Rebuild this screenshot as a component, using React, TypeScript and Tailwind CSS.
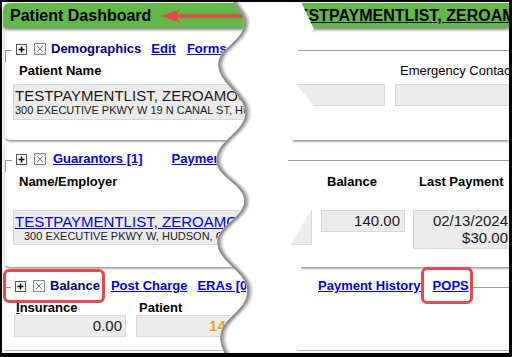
const WAVE =
  'M232,0 C236,8 244,14 244,22 C244,42 218,48 218,64 C218,84 245,93 245,113 C245,132 216,141 216,160 C216,177 244,184 244,201 C244,218 217,226 217,242 C217,262 247,271 247,291 C247,312 220,318 220,338 C220,346 224,352 226,357'

const GAP =
  WAVE +
  ' L297,357 L297,350 L305,300 L301,267 L288,249 L311,210 L288,161 L293,140 L313,105 L296,84 L298,50 L314,29 L300,0 Z'

const SHADES = ['#f3f3f3', '#e4e4e4', '#d0d0d0', '#b9b9b9', '#a2a2a2', '#8c8c8c']

function PlusBox() {
  return (
    <svg width="11" height="11" viewBox="0 0 11 11" className="shrink-0">
      <rect x="0.5" y="0.5" width="10" height="10" fill="#fff" stroke="#555" />
      <path d="M2.5 5.5h6M5.5 2.5v6" stroke="#000" strokeWidth="1.5" />
    </svg>
  )
}

function CloseBox() {
  return (
    <svg width="12" height="12" viewBox="0 0 12 12" className="shrink-0">
      <rect x="0.5" y="0.5" width="11" height="11" fill="#fff" stroke="#8a8a8a" />
      <path d="M3 3L9 9M9 3L3 9" stroke="#7a7a7a" strokeWidth="1" />
    </svg>
  )
}

function Bracket() {
  return <div className="w-[7px] h-[12px] mt-[9px] self-start shrink-0 border-l border-t border-[#999]" />
}

function Rule() {
  return <div className="flex-1 h-0 mt-[9px] self-start border-t border-[#999]" />
}

function Link({ children, className = '' }: { children: React.ReactNode; className?: string }) {
  return <a className={`text-[#0000ee] underline font-bold whitespace-nowrap shrink-0 ${className}`}>{children}</a>
}

const box = 'shrink-0 bg-[#ebebeb] border border-[#d8d8d8]'

export default function App() {
  return (
    <div className="w-[512px] h-[357px] bg-black pl-[2px] pt-[2px] pr-[3px] pb-[4px] font-['Liberation_Sans',Arial,sans-serif] text-black">
      <div className="relative w-full h-full bg-white overflow-hidden">
        {/* title bar */}
        <div className="mt-[1px] ml-[1px] h-[25px] flex items-center bg-[#63b84a] rounded-tl-[7px] rounded-bl-[3px] shadow-[0_2px_3px_rgba(0,0,0,0.45)] text-[16px] font-bold whitespace-nowrap overflow-hidden">
          <div className="w-[285px] shrink-0 pl-[7px]">Patient Dashboard</div>
          <div className="underline">TESTPAYMENTLIST, ZEROAMOUNT</div>
        </div>

        {/* demographics */}
        <div className="ml-[2px] pt-[13px] pb-[20px] border-b border-l border-[#a0a0a0] border-l-[#e6e6e6] rounded-bl-[6px] shadow-[0_1px_2px_rgba(0,0,0,0.3)]">
          <div className="flex items-center h-[16px] text-[13px] leading-[16px] font-bold">
            <Bracket />
            <div className="ml-[4px]"><PlusBox /></div>
            <div className="ml-[7px]"><CloseBox /></div>
            <span className="ml-[5px] text-[#00008b] shrink-0">Demographics</span>
            <Link className="ml-[10px]">Edit</Link>
            <Link className="ml-[11px]">Forms</Link>
            <Rule />
          </div>
          <div className="flex items-center mt-[6px] h-[16px] text-[13px] leading-[16px] whitespace-nowrap">
            <div className="w-[395px] shrink-0 pl-[14px] font-bold">Patient Name</div>
            <div>Emergency Contact</div>
          </div>
          <div className="flex mt-[5px] pl-[8px]">
            <div className={`${box} w-[248px] h-[36px] pt-[2px] pl-[1px] text-[#1a1a1a] whitespace-nowrap overflow-hidden`}>
              <div className="text-[15px] leading-[17px]">TESTPAYMENTLIST, ZEROAMOUNT</div>
              <div className="text-[11px] leading-[13px]">300 EXECUTIVE PKWY W 19 N CANAL ST, HUDSON, OH 44236</div>
            </div>
            <div className={`${box} ml-[25px] w-[99px] h-[22px]`} />
            <div className={`${box} ml-[10px] w-[130px] h-[22px]`} />
          </div>
        </div>

        {/* guarantors */}
        <div className="ml-[2px] mt-[4px] pt-[6px] pb-[18px] border-b border-l border-[#a0a0a0] border-l-[#e6e6e6] rounded-bl-[6px] shadow-[0_1px_2px_rgba(0,0,0,0.3)]">
          <div className="flex items-center h-[16px] text-[13px] leading-[16px] font-bold">
            <Bracket />
            <div className="ml-[4px]"><PlusBox /></div>
            <div className="ml-[7px]"><CloseBox /></div>
            <Link className="ml-[7px]">Guarantors [1]</Link>
            <Link className="ml-[29px]">Payments</Link>
            <Rule />
          </div>
          <div className="flex items-center mt-[7px] h-[16px] text-[13px] leading-[16px] font-bold whitespace-nowrap">
            <div className="w-[322px] shrink-0 pl-[14px]">Name/Employer</div>
            <div className="w-[92px] shrink-0">Balance</div>
            <div>Last Payment</div>
          </div>
          <div className="flex items-start mt-[20px] pl-[8px] text-[15px] text-[#1a1a1a]">
            <div className={`${box} w-[299px] h-[35px] pt-[3px] pl-[1px] whitespace-nowrap overflow-hidden`}>
              <div className="leading-[16px] text-[#0000ee] underline">TESTPAYMENTLIST, ZEROAMOUNT</div>
              <div className="pl-[9px] text-[11px] leading-[13px]">300 EXECUTIVE PKWY W, HUDSON, OH 44236</div>
            </div>
            <div className={`${box} ml-[9px] w-[84px] h-[22px] pr-[4px] text-right leading-[20px]`}>140.00</div>
            <div className={`${box} ml-[8px] w-[101px] h-[39px] pt-[1px] pr-[5px] text-right leading-[17px]`}>
              <div>02/13/2024</div>
              <div>$30.00</div>
            </div>
          </div>
        </div>

        {/* balance */}
        <div className="ml-[2px] mt-[2px] pt-[8px] pb-[13px] border-b border-[#b0b0b0]">
          <div className="flex items-center h-[16px] text-[13px] leading-[16px] font-bold">
            <div className="w-[314px] shrink-0 flex items-center h-[16px] overflow-hidden">
              <Bracket />
              <div className="ml-[4px]"><PlusBox /></div>
              <div className="ml-[7px]"><CloseBox /></div>
              <span className="ml-[5px] text-[#00008b] shrink-0">Balance</span>
              <Link className="ml-[11px]">Post Charge</Link>
              <Link className="ml-[10px]">ERAs [0]</Link>
            </div>
            <Link>Payment History</Link>
            <Link className="ml-[12px]">POPS</Link>
            <div className="ml-[2px] flex-1 h-0 mt-[9px] self-start border-t border-[#999]" />
          </div>
          <div className="flex items-center mt-[6px] h-[15px] text-[13px] leading-[15px] font-bold">
            <div className="w-[135px] shrink-0 pl-[12px]">
              <span className="underline">I</span>nsurance
            </div>
            <div>Patient</div>
          </div>
          <div className="flex pl-[10px] text-[15px] leading-[20px]">
            <div className={`${box} w-[112px] h-[22px] pr-[3px] text-right text-[#1a1a1a]`}>0.00</div>
            <div className={`${box} ml-[10px] w-[123px] h-[22px] pr-[3px] text-right font-bold text-[#f0a30a]`}>140.00</div>
          </div>
        </div>

        {/* torn paper gap and arrow */}
        <svg
          className="absolute left-0 top-0 pointer-events-none"
          width="507"
          height="351"
          viewBox="2 2 507 351"
        >
          <line x1="176" y1="16" x2="262" y2="16" stroke="#e8474d" strokeWidth="3.5" />
          <polygon points="160,16 180,9.5 176,16 180,22.5" fill="#e8474d" />
          <path d={GAP} fill="#fff" />
          {SHADES.map((c, i) => (
            <path
              key={c}
              d={WAVE}
              transform={`translate(${6 - i},0)`}
              fill="none"
              stroke={c}
              strokeWidth="1.6"
            />
          ))}
        </svg>

        {/* highlights */}
        <div className="absolute left-[1px] top-[267px] w-[102px] h-[34px] border-[3px] border-[#e8474d] rounded-[6px]" />
        <div className="absolute left-[419px] top-[265px] w-[52px] h-[37px] border-[3px] border-[#e8474d] rounded-[6px]" />
      </div>
    </div>
  )
}
